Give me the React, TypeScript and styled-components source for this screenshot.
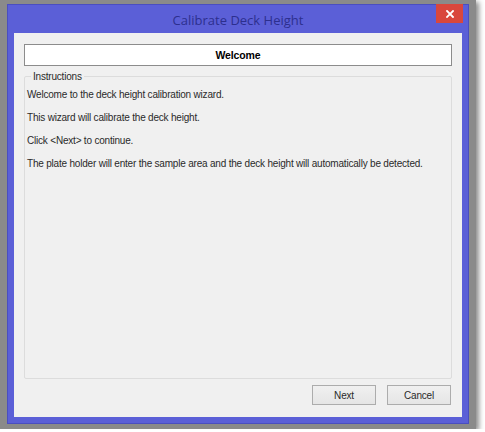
import styled, { createGlobalStyle } from 'styled-components';

const GlobalStyle = createGlobalStyle`
  html, body {
    margin: 0;
    padding: 0;
    background: #ffffff;
  }
  body {
    font-family: "Liberation Sans", Arial, sans-serif;
  }
`;

const lines = [
  'Welcome to the deck height calibration wizard.',
  'This wizard will calibrate the deck height.',
  'Click <Next> to continue.',
  'The plate holder will enter the sample area and the deck height will automatically be detected.',
];

export default function App() {
  return (
    <>
      <GlobalStyle />
      <Backdrop>
        <Window>
          <TitleBar>
            <Title>Calibrate Deck Height</Title>
            <CloseButton aria-label='Close'>
              <svg width='8' height='8' viewBox='0 0 8 8'>
                <path d='M1 1 L7 7 M7 1 L1 7' stroke='#ffffff' strokeWidth='1.8' strokeLinecap='square' />
              </svg>
            </CloseButton>
          </TitleBar>

          <Client>
            <Header>Welcome</Header>

            <GroupBox>
              <Legend>Instructions</Legend>
              {lines.map((line) => (
                <Line key={line}>{line}</Line>
              ))}
            </GroupBox>

            <ButtonRow>
              <DialogButton>Next</DialogButton>
              <DialogButton>Cancel</DialogButton>
            </ButtonRow>
          </Client>
        </Window>
      </Backdrop>
    </>
  );
}

const Backdrop = styled.div`
  width: 476px;
  height: 429px;
  box-sizing: border-box;
  padding: 4px 7px 5px 7px;
  background: #8a8a8a;
  box-shadow: 3px 2px 5px rgba(0, 0, 0, 0.45);
`;

const Window = styled.div`
  height: 100%;
  box-sizing: border-box;
  background: #5b5fd7;
  border: 1px solid #4a4ec0;
  padding: 0 6px 6px 6px;
  display: flex;
  flex-direction: column;
`;

const TitleBar = styled.div`
  height: 28px;
  display: flex;
  align-items: center;
  justify-content: center;
  position: relative;
`;

const Title = styled.div`
  font-family: "Open Sans", "Segoe UI", sans-serif;
  font-size: 13px;
  color: #2d2f8e;
  padding-top: 1px;
`;

const CloseButton = styled.div`
  position: absolute;
  right: -1px;
  top: -1px;
  width: 27px;
  height: 19px;
  background: #d9473d;
  display: flex;
  align-items: center;
  justify-content: center;
`;

const Client = styled.div`
  flex: 1;
  background: #f0f0f0;
  padding: 11px 10px 12px 10px;
  display: flex;
  flex-direction: column;
`;

const Header = styled.div`
  height: 22px;
  box-sizing: border-box;
  border: 1px solid #8c8c8c;
  background: #ffffff;
  display: flex;
  align-items: center;
  justify-content: center;
  font-size: 10.5px;
  font-weight: bold;
  letter-spacing: -0.1px;
  color: #000;
`;

const GroupBox = styled.fieldset`
  flex: 1;
  margin: 5px 0 0 0;
  padding: 6px 0 0 2px;
  border: 1px solid #dcdcdc;
  border-radius: 2px;
  min-width: 0;
`;

const Legend = styled.legend`
  font-size: 10px;
  letter-spacing: -0.2px;
  color: #2a2a2a;
  padding: 0 2px;
  margin-left: 4px;
`;

const Line = styled.div`
  font-size: 10px;
  letter-spacing: -0.2px;
  color: #2a2a2a;
  line-height: 13px;
  margin-bottom: 10px;
  white-space: nowrap;
`;

const ButtonRow = styled.div`
  display: flex;
  justify-content: flex-end;
  gap: 11px;
  margin-top: 6px;
  padding-right: 1px;
`;

const DialogButton = styled.div`
  width: 64px;
  height: 20px;
  box-sizing: border-box;
  border: 1px solid #acacac;
  background: linear-gradient(#f0f0f0, #e5e5e5);
  display: flex;
  align-items: center;
  justify-content: center;
  font-size: 10px;
  letter-spacing: -0.2px;
  color: #2a2a2a;
`;
